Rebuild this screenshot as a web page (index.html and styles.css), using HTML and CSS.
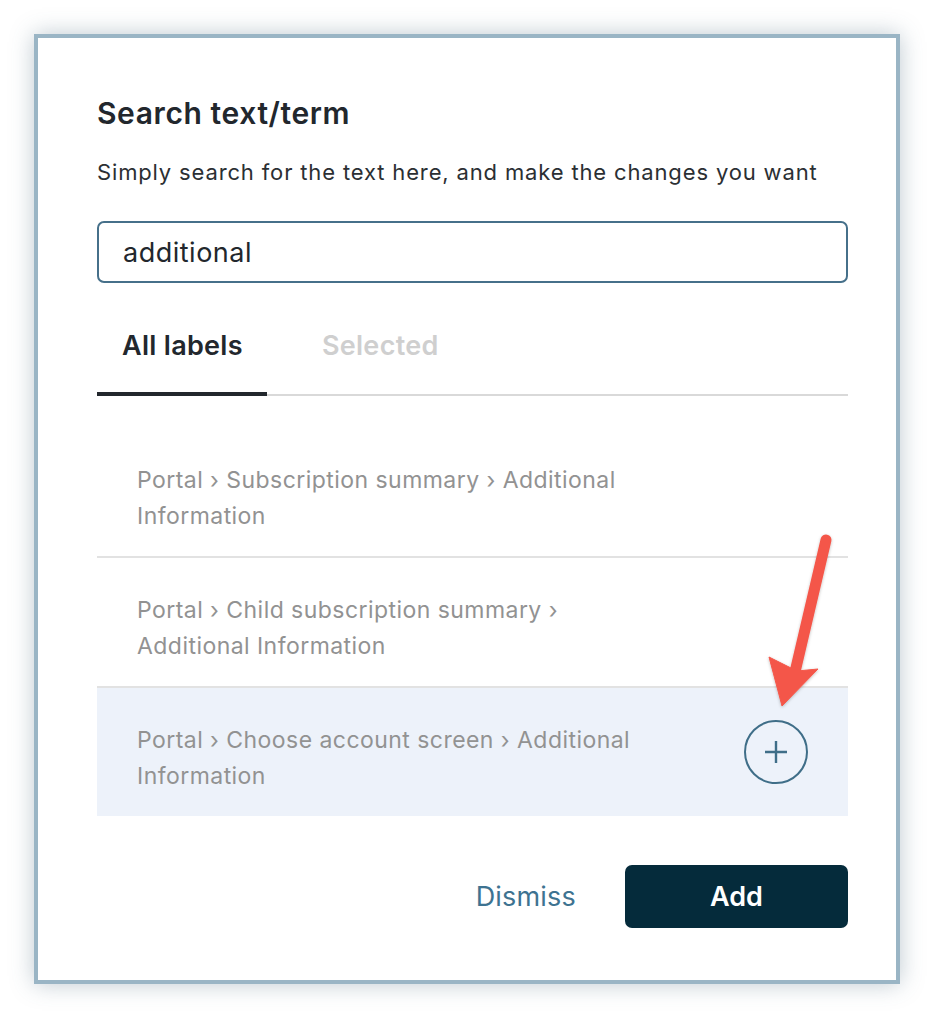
FILE: index.html
```html
<!DOCTYPE html>
<html lang="en">
<head>
  <meta charset="UTF-8" />
  <title>Search text/term</title>
  <link rel="stylesheet" href="styles.css">
</head>
<body>

  <div class="dialog">
    <h2 class="title">Search text/term</h2>
    <p class="subtitle">Simply search for the text here, and make the changes you want</p>

    <input class="search" type="text" value="additional" />

    <div class="tabs">
      <button class="tab active">All labels</button>
      <button class="tab">Selected</button>
    </div>

    <ul class="results">
      <li class="result">
        <span class="label">Portal › Subscription summary › Additional Information</span>
      </li>
      <li class="result">
        <span class="label">Portal › Child subscription summary › Additional Information</span>
      </li>
      <li class="result hover">
        <span class="label">Portal › Choose account screen › Additional Information</span>
        <button class="add-icon" aria-label="Add label">
          <svg width="64" height="64" viewBox="0 0 64 64">
            <circle cx="32" cy="32" r="31" fill="none" stroke="#3f6e88" stroke-width="2" />
            <path d="M32 21v22M21 32h22" stroke="#3f6e88" stroke-width="2.4" fill="none" />
          </svg>
        </button>
      </li>
    </ul>

    <div class="actions">
      <button class="dismiss">Dismiss</button>
      <button class="primary">Add</button>
    </div>
  </div>

  <!-- annotation arrow -->
  <svg class="arrow" width="934" height="1018" viewBox="0 0 934 1018">
    <defs>
      <filter id="shade" x="-50%" y="-50%" width="200%" height="200%">
        <feDropShadow dx="0" dy="1" stdDeviation="1.5" flood-color="#000" flood-opacity="0.25" />
      </filter>
    </defs>
    <g filter="url(#shade)" fill="#f4574a" stroke="#f4574a">
      <line x1="826" y1="540" x2="795" y2="672" stroke-width="11" stroke-linecap="round" />
      <polygon points="769,657 797,671 818,669 782,706" stroke-width="1" stroke-linejoin="round" />
    </g>
  </svg>

</body>
</html>
```

FILE: styles.css
```css
body {
  margin: 0;
  padding: 34px;
  background: #fff;
  font-family: Inter, "Noto Sans", sans-serif;
}
.dialog {
  width: 858px;
  height: 942px;
  box-sizing: content-box;
  border: 4px solid #9ab5c5;
  background: #fff;
  box-shadow: 0 0 22px rgba(70, 100, 120, 0.35);
  padding: 0;
}
.dialog > * {
  margin-left: 59px;
  margin-right: 48px;
}
.title {
  margin-top: 57px;
  margin-bottom: 0;
  font-size: 30px;
  line-height: 36px;
  letter-spacing: 0.6px;
  font-weight: 600;
  color: #22272d;
}
.subtitle {
  margin-top: 27px;
  margin-bottom: 0;
  font-size: 22px;
  line-height: 28px;
  letter-spacing: 0.85px;
  color: #2b2f33;
}
.search {
  display: block;
  width: 751px;
  box-sizing: border-box;
  height: 62px;
  margin-top: 35px;
  padding: 0 24px;
  border: 2px solid #46708a;
  border-radius: 7px;
  font-family: inherit;
  font-size: 27px;
  letter-spacing: 0.5px;
  color: #22272d;
  outline: none;
}
.tabs {
  display: flex;
  gap: 30px;
  margin-top: 23px;
  box-shadow: inset 0 -2px 0 #d9d9d9;
}
.tab {
  background: none;
  border: none;
  border-bottom: 4px solid transparent;
  padding: 24px 24px 30px 25px;
  font-family: inherit;
  font-size: 27px;
  line-height: 32px;
  letter-spacing: 0.3px;
  font-weight: 600;
  color: #cfcfcf;
  cursor: pointer;
}
.tab.active {
  color: #22272d;
  border-bottom-color: #22272d;
}
.results {
  list-style: none;
  margin-top: 32px;
  margin-bottom: 0;
  padding: 0;
}
.result {
  display: flex;
  align-items: center;
  justify-content: space-between;
  padding: 34px 40px 22px;
  border-bottom: 2px solid #e2e2e2;
}
.result:last-child {
  border-bottom: none;
}
.result.hover {
  background: #edf2fa;
}
.label {
  max-width: 515px;
  font-size: 23px;
  line-height: 36px;
  letter-spacing: 0.45px;
  color: #929292;
}
.add-icon {
  display: flex;
  background: none;
  border: none;
  padding: 0;
  margin-top: -12px;
  cursor: pointer;
}
.actions {
  display: flex;
  justify-content: flex-end;
  align-items: center;
  gap: 49px;
  margin-top: 49px;
}
.dismiss {
  background: none;
  border: none;
  padding: 0;
  font-family: inherit;
  font-size: 27px;
  letter-spacing: 0.2px;
  color: #3e7391;
  cursor: pointer;
}
.primary {
  width: 223px;
  height: 63px;
  background: #052b3b;
  color: #fff;
  border: none;
  border-radius: 7px;
  font-family: inherit;
  font-size: 27px;
  font-weight: 600;
  cursor: pointer;
}
.arrow {
  position: absolute;
  top: 0;
  left: 0;
  pointer-events: none;
}
```
